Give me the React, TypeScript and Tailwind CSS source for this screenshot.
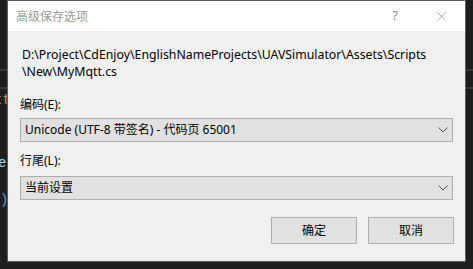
import { X } from "lucide-react"

const Chevron = () => (
  <svg width="10" height="6" viewBox="0 0 10 6" className="shrink-0">
    <path d="M0.5 0.5 L5 5 L9.5 0.5" fill="none" stroke="#505050" strokeWidth="1" />
  </svg>
)

function Select({ value }: { value: string }) {
  return (
    <div className="mx-[12px] flex h-[24px] items-center justify-between border border-[#adadad] bg-[#e1e1e1] pl-[4px] pr-[4px]">
      <span className="leading-none">{value}</span>
      <Chevron />
    </div>
  )
}

export default function App() {
  return (
    <div className="relative h-[269px] w-[473px] overflow-hidden bg-[#1e1e1e] font-['Noto_Sans','Noto_Sans_CJK_SC',sans-serif] text-[12px] text-black">
      {/* editor behind the dialog */}
      <div className="absolute left-0 right-0 top-[69px] h-[2px] bg-[#3a3a3a]" />
      <div className="absolute left-0 right-0 top-[87px] h-[2px] bg-[#3a3a3a]" />
      <div className="absolute left-0 top-[90px] w-[7px] overflow-hidden font-['Liberation_Mono',monospace] text-[14px] text-[#ce9178]">
        <span className="ml-[-6px]">tt</span>
      </div>
      <div className="absolute left-0 top-[153px] w-[7px] overflow-hidden font-['Liberation_Mono',monospace] text-[14px] text-[#9cdcfe]">
        <span className="ml-[-2px]">e</span>
      </div>
      <div className="absolute left-0 top-[190px] font-['Liberation_Mono',monospace] text-[14px] text-[#569cd6]">)</div>

      {/* dialog */}
      <div className="absolute left-[7px] top-0 flex h-[262px] w-[459px] flex-col border border-[#5e5e5e] bg-[#f0f0f0]">
        <div className="flex h-[30px] shrink-0 items-center bg-white pl-[8px]">
          <span className="font-['Noto_Sans_CJK_SC',sans-serif] text-[12px] text-[#9a9a9a]">高级保存选项</span>
          <span className="ml-auto mr-[36px] text-[13px] text-[#8a8a8a]">?</span>
          <X size={15} strokeWidth={1} color="#7a7a7a" className="mr-[16px]" />
        </div>

        <div className="mt-[15px] px-[14px] text-[12.3px] leading-[17px]">
          D:\Project\CdEnjoy\EnglishNameProjects\UAVSimulator\Assets\Scripts
          <br />
          \New\MyMqtt.cs
        </div>

        <div className="mt-[16px] px-[12px] leading-[17px]">编码(E):</div>
        <div className="mt-[5px]">
          <Select value="Unicode (UTF-8 带签名) - 代码页 65001" />
        </div>

        <div className="mt-[10px] px-[12px] leading-[17px]">行尾(L):</div>
        <div className="mt-[7px]">
          <Select value="当前设置" />
        </div>

        <div className="mt-[17px] flex justify-end gap-[11px] pr-[11px]">
          <button className="flex h-[27px] w-[86px] items-center justify-center border border-[#adadad] bg-[#e1e1e1]">确定</button>
          <button className="flex h-[27px] w-[86px] items-center justify-center border border-[#adadad] bg-[#e1e1e1]">取消</button>
        </div>
      </div>
    </div>
  )
}
